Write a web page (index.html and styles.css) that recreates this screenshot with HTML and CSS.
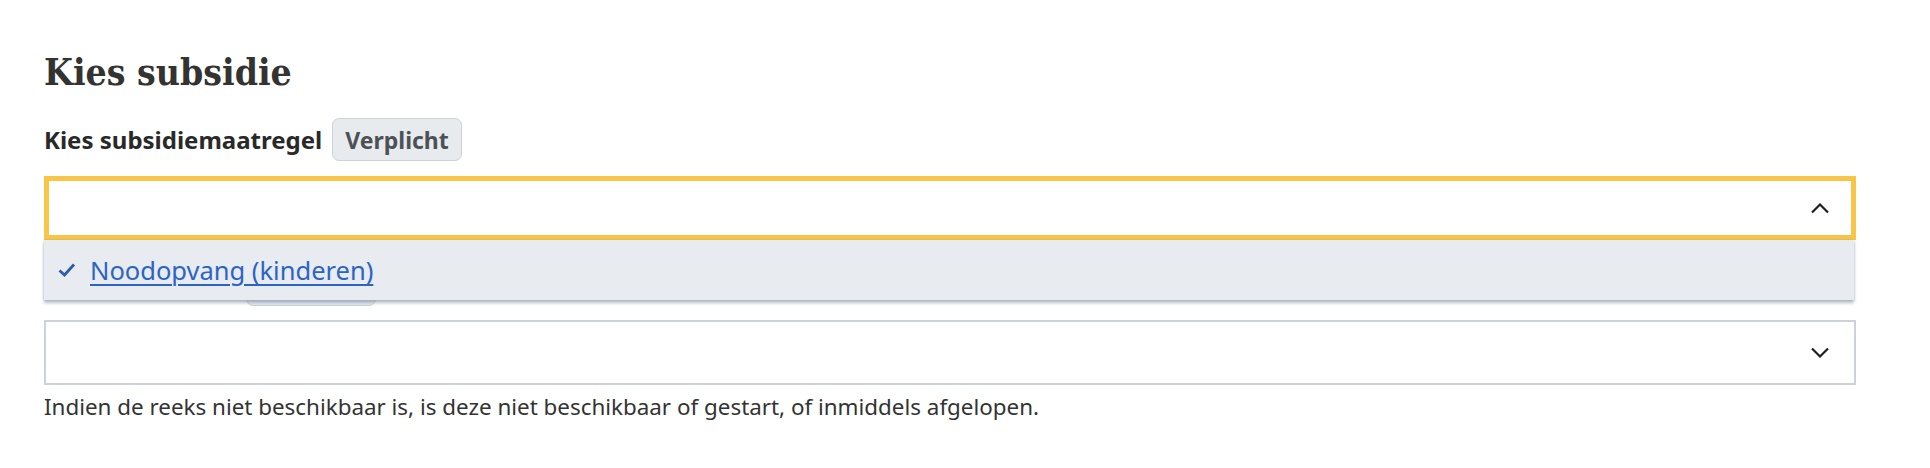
FILE: index.html
```html
<!DOCTYPE html>
<html lang="nl">
<head>
<meta charset="utf-8">
<link rel="stylesheet" href="styles.css">
</head>
<body>
<main class="page">
  <h1 class="title">Kies subsidie</h1>
  <div class="field">
    <div class="label-row">
      <span class="label">Kies subsidiemaatregel</span>
      <span class="badge">Verplicht</span>
    </div>
    <div class="select-wrap">
      <div class="select select--open">
        <svg class="chevron" width="20" height="12" viewBox="0 0 20 12"><path d="M2 10.5 L10 2.5 L18 10.5" fill="none" stroke="#1f1f1f" stroke-width="2.2"/></svg>
      </div>
      <div class="menu">
        <div class="option">
          <svg class="check" width="18" height="14" viewBox="0 0 18 14"><path d="M1.5 7.5 L6.5 12 L16 1.5" fill="none" stroke="#2d5da8" stroke-width="2.8"/></svg>
          <a class="option-link" href="#">Noodopvang (kinderen)</a>
        </div>
      </div>
    </div>
  </div>
  <div class="field field--second">
    <div class="label-row">
      <span class="label">Kies een periode</span>
      <span class="badge">Verplicht</span>
    </div>
    <div class="select">
      <svg class="chevron" width="20" height="12" viewBox="0 0 20 12"><path d="M2 1.5 L10 9.5 L18 1.5" fill="none" stroke="#1f1f1f" stroke-width="2.2"/></svg>
    </div>
    <p class="hint">Indien de reeks niet beschikbaar is, is deze niet beschikbaar of gestart, of inmiddels afgelopen.</p>
  </div>
</main>
</body>
</html>
```

FILE: styles.css
```css
* { box-sizing: border-box; }
html, body { margin: 0; padding: 0; background: #fff; }
body { font-family: "Noto Sans", "Open Sans", sans-serif; color: #333332; }

.page {
  padding: 50px 74px 0 44px;
}

.title {
  margin: 0;
  font-family: "DejaVu Serif", serif;
  font-stretch: condensed;
  font-weight: 700;
  font-size: 37px;
  line-height: 44px;
  color: #333332;
}

.field { margin-top: 24px; }
.field--second { margin-top: 23px; }

.label-row {
  display: flex;
  align-items: center;
  gap: 10px;
  margin-bottom: 15px;
}
.field--second .label-row { margin-bottom: 14px; gap: 4px; }

.label {
  font-weight: 700;
  font-size: 24px;
  color: #29292a;
}

.badge {
  display: inline-flex;
  align-items: center;
  height: 43px;
  padding: 0 12px;
  border: 1.5px solid #cbd2da;
  border-radius: 7px;
  background: #e8ebee;
  color: #4c5157;
  font-weight: 700;
  font-size: 23px;
}

.select-wrap { position: relative; }

.select {
  height: 65px;
  border: 2px solid #cbd2da;
  background: #fff;
  display: flex;
  align-items: center;
  justify-content: flex-end;
  padding-right: 24px;
}
.select--open {
  height: 64px;
  border: 5px solid #f8c547;
  padding-right: 21px;
}

.menu {
  position: absolute;
  top: 100%;
  left: 0;
  right: 2px;
  height: 60px;
  background: #e8ebef;
  box-shadow: 0 3px 3px rgba(120, 138, 160, 0.55), 0 0 2px rgba(120,138,160,0.4);
  display: flex;
  align-items: center;
  z-index: 2;
}

.option {
  display: flex;
  align-items: center;
  gap: 14px;
  padding-left: 14px;
}

.option-link {
  color: #2b64c6;
  font-size: 25.5px;
  text-decoration: underline;
  text-underline-offset: 4px;
  text-decoration-thickness: 2px;
}

.hint {
  margin: 6px 0 0;
  font-size: 22.4px;
  color: #333332;
}
```
